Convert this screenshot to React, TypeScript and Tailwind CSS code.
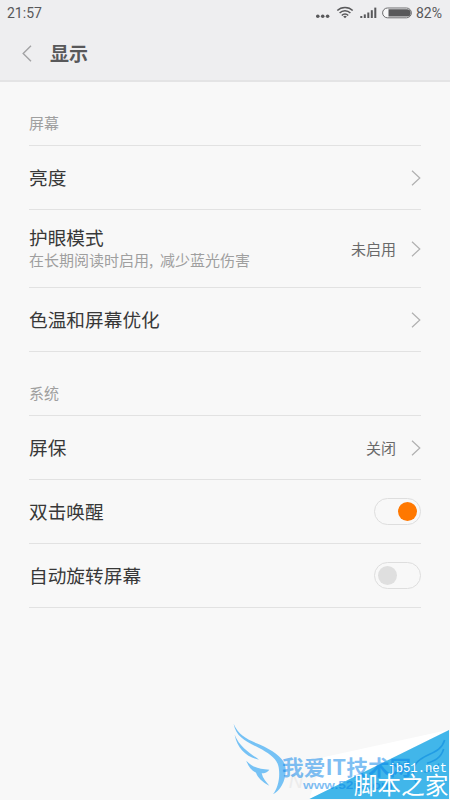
import React, { useState } from 'react';

interface RowProps {
  title: string;
  description?: string;
  value?: string;
  children?: React.ReactNode;
}

const ChevronRight = () => (
  <svg width="10" height="16" viewBox="0 0 10 16" fill="none" className="shrink-0">
    <path d="M1 0.8L8.8 8L1 15.2" stroke="#b0b0b0" strokeWidth="1.2" />
  </svg>
);

const StatusBar = () => (
  <div className="flex h-[26px] items-center justify-between pl-[7px] pr-2 font-[Roboto,sans-serif] text-sm text-[#58585a]">
    <span>21:57</span>
    <div className="flex items-center">
      <svg width="96" height="14" viewBox="0 0 96 14" className="mr-1">
        {/* Dots */}
        <g fill="#58585a">
          <circle cx="1.8" cy="10.3" r="1.8" />
          <circle cx="6.7" cy="10.3" r="1.8" />
          <circle cx="11.6" cy="10.3" r="1.8" />
        </g>
        {/* Wifi */}
        <g fill="none" stroke="#58585a" strokeWidth="1.5">
          <path d="M21.3 4.6C25.3 0.4 32.7 0.4 36.7 4.6" />
          <path d="M23.6 7.1C26.5 4 31.5 4 34.4 7.1" />
          <path d="M25.8 9.5C27.5 7.6 30.5 7.6 32.2 9.5" />
        </g>
        <path d="M27.2 10.5Q29 9 30.8 10.5L29 12.3Z" fill="#58585a" />
        {/* Signal */}
        <g fill="#58585a">
          <rect x="44.3" y="10" width="2" height="2" />
          <rect x="47.8" y="8.4" width="2" height="3.6" />
          <rect x="51.3" y="6.5" width="2" height="5.5" />
          <rect x="54.8" y="4.2" width="2" height="7.8" />
          <rect x="58.3" y="1.6" width="2" height="10.4" />
        </g>
        {/* Battery */}
        <rect x="66.6" y="2" width="28.8" height="9.8" rx="4.9" fill="#f7f7f8" stroke="#6c6c6e" />
        <path d="M72.5 3.2H91A3.7 3.7 0 0 1 91 10.6H72.5Z" fill="#58585a" />
      </svg>
      <span>82%</span>
    </div>
  </div>
);

const SectionLabel = ({ children }: { children: React.ReactNode }) => (
  <div className="flex h-16 items-center border-b border-[#e2e2e2] pt-5 text-[15px] text-[#9f9f9f]">
    {children}
  </div>
);

const Row = ({ title, description, value, children }: RowProps) => (
  <div
    className={`flex items-center justify-between border-b border-[#e2e2e2] ${description ? 'h-[78px]' : 'h-16'}`}
  >
    <div className="pb-0.5">
      <div className="text-[18.7px] leading-[24px] text-[#383838]">{title}</div>
      {description && (
        <div className="text-[15px] leading-[22px] text-[#9f9f9f] [word-spacing:3.5px]">{description}</div>
      )}
    </div>
    {children || (
      <div className="flex items-center gap-[15px]">
        {value && <span className="pt-px text-[15px] text-[#6a6a6a]">{value}</span>}
        <ChevronRight />
      </div>
    )}
  </div>
);

const Toggle = ({ initial }: { initial: boolean }) => {
  const [on, setOn] = useState(initial);

  return (
    <button
      onClick={() => setOn(!on)}
      className={`flex h-[27px] w-[47px] items-center rounded-full border border-[#dedede] px-[3px] ${on ? 'justify-end' : 'justify-start'}`}
    >
      <span className={`size-[19px] rounded-full ${on ? 'bg-[#ff7800]' : 'bg-[#dfdfdf]'}`} />
    </button>
  );
};

const Watermark = () => (
  <svg
    className="pointer-events-none absolute bottom-0 right-0"
    width="250"
    height="120"
    viewBox="0 0 750 360"
  >
    <path d="M747 149L370 232L328 357Z" fill="#ffffff" />
    <path d="M747 150V357H328Z" fill="#41b6ea" />
    {/* Left wing */}
    <g fill="#76c2f5">
      <path d="M101 132C116 166 142 178 177 193C228 216 256 238 257 267C258 303 240 333 219 343C232 325 240 300 237 270C235 237 211 222 176 203C135 184 108 169 101 132Z" />
      <path d="M104 164C112 207 140 231 177 239C153 221 118 201 104 164Z" />
      <path d="M139 242C157 262 177 267 208 269C204 276 194 280 185 280C189 296 198 306 208 317C185 305 173 292 168 278C153 271 144 258 139 242Z" />
    </g>
    {/* Right wing */}
    <g fill="none" stroke="#219ce4" strokeWidth="5">
      <path d="M734 180C723 217 688 218 660 239C636 256 634 285 650 310" />
      <path d="M731 207C722 235 705 242 681 250" />
      <path d="M717 251C708 271 690 273 673 276" />
    </g>
    <text x="266" y="325" fontSize="60" fontStyle="italic" fill="#ececec" fontFamily="Liberation Sans, sans-serif">N</text>
    <g fill="#0080e8" fillOpacity="0.5" fontWeight="bold">
      <text x="246" y="285" fontSize="63" textLength="388" lengthAdjust="spacingAndGlyphs" fontFamily="Noto Sans CJK SC, sans-serif">我爱IT技术网</text>
      <text x="309" y="327" fontSize="34" textLength="270" lengthAdjust="spacingAndGlyphs" fontFamily="Liberation Sans, sans-serif">www.52ij.com</text>
    </g>
    <g fill="#ffffff">
      <text x="565" y="276" fontSize="37" textLength="176" lengthAdjust="spacingAndGlyphs" fontFamily="Liberation Mono, monospace">jb51.net</text>
      <text x="461" y="342" fontSize="70" textLength="284" lengthAdjust="spacingAndGlyphs" fontFamily="Noto Sans CJK SC, sans-serif">脚本之家</text>
    </g>
  </svg>
);

export default function App() {
  return (
    <div className="relative h-[800px] w-[450px] overflow-hidden bg-[#f8f8f8] font-['Noto_Sans_CJK_SC',sans-serif]">
      <header className="h-[82px] border-b-2 border-[#e4e4e5] bg-[#eeeef0]">
        <StatusBar />
        <div className="flex h-[54px] items-center pl-[22px]">
          <svg width="10" height="17" viewBox="0 0 10 17" fill="none">
            <path d="M9 0.8L1.2 8.5L9 16.2" stroke="#a2a2a4" strokeWidth="1.4" />
          </svg>
          <h1 className="ml-[18px] text-[19px] font-bold leading-6 text-[#58585a]">显示</h1>
        </div>
      </header>

      <main className="pl-[29px] pr-[29px]">
        <SectionLabel>屏幕</SectionLabel>
        <Row title="亮度" />
        <Row title="护眼模式" description="在长期阅读时启用, 减少蓝光伤害" value="未启用" />
        <Row title="色温和屏幕优化" />

        <SectionLabel>系统</SectionLabel>
        <Row title="屏保" value="关闭" />
        <Row title="双击唤醒">
          <Toggle initial={true} />
        </Row>
        <Row title="自动旋转屏幕">
          <Toggle initial={false} />
        </Row>
      </main>

      <Watermark />
    </div>
  );
}
